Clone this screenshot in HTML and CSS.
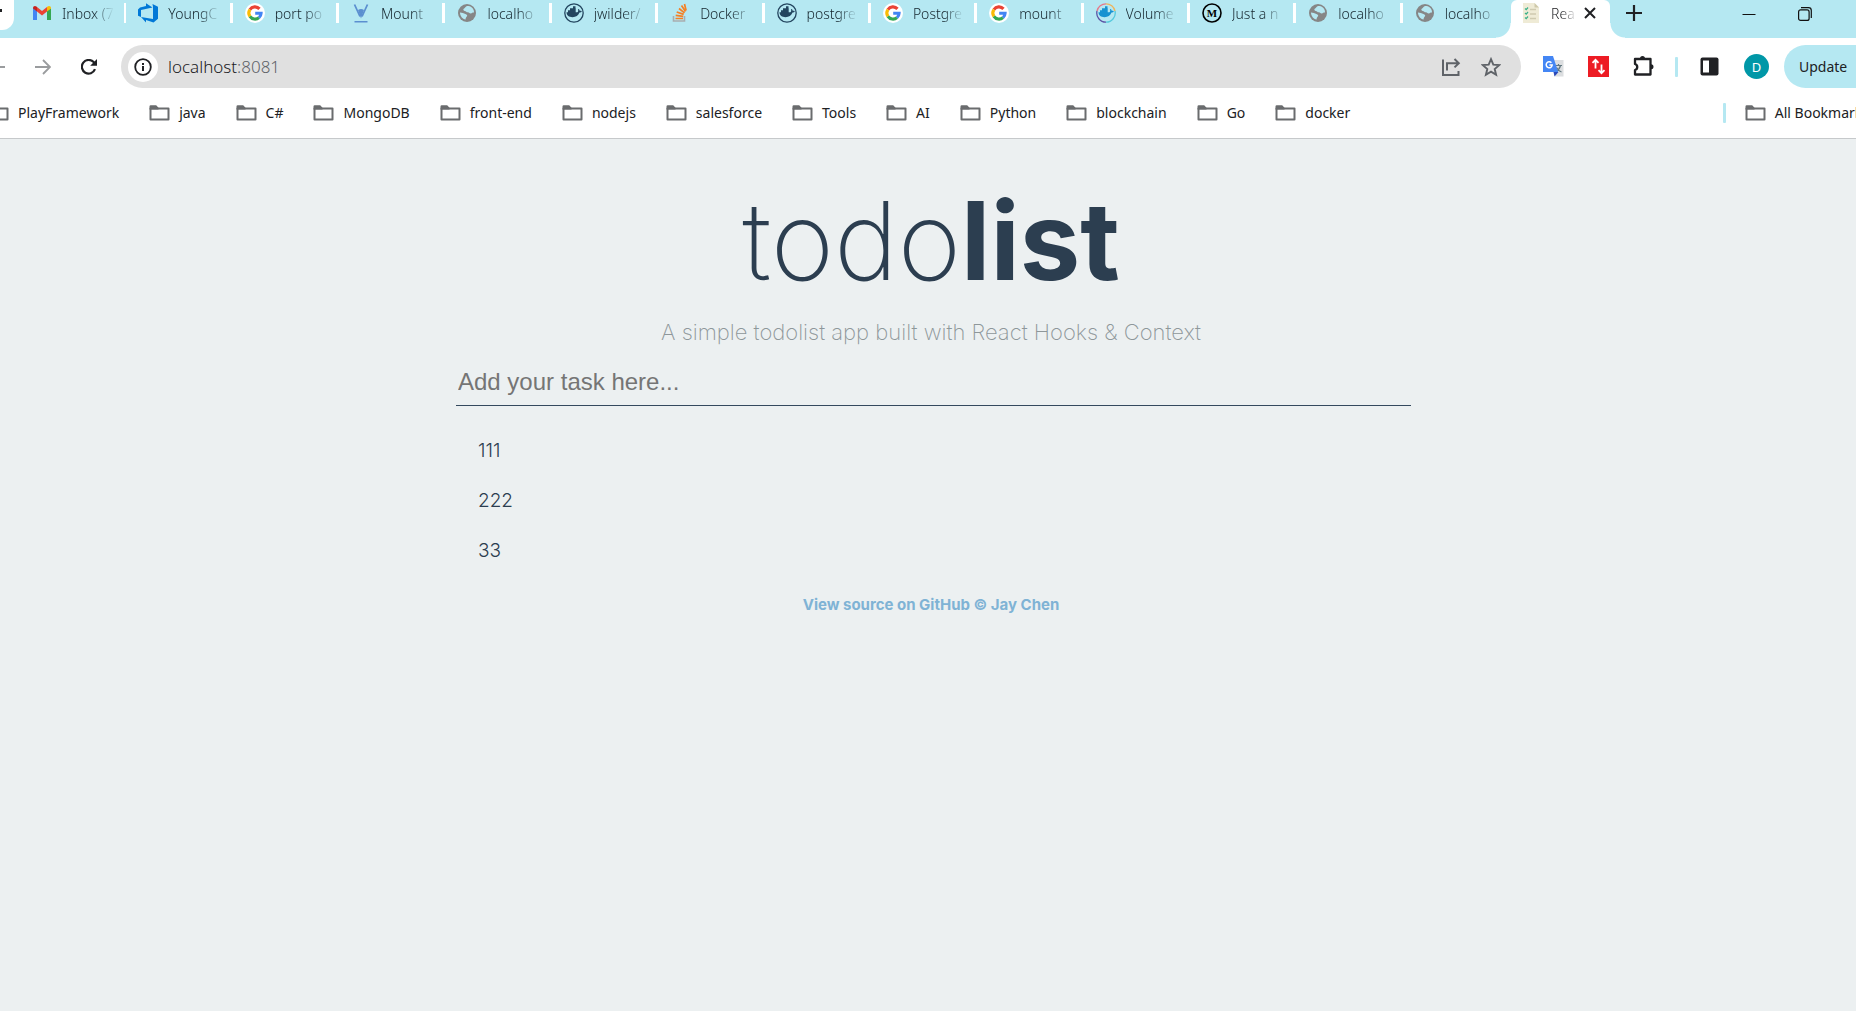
FILE: index.html
```html
<!DOCTYPE html>
<html lang="en">
<head>
<meta charset="utf-8">
<title>React Todolist</title>
<link rel="stylesheet" href="styles.css">
</head>
<body>
<svg class="defs" aria-hidden="true">
  <symbol id="folder" viewBox="0 0 21 16"><path d="M1.500 3.500h18v11h-18z" fill="#fff" stroke="#6a6c6e" stroke-width="2" stroke-linejoin="round"/><path d="M.5 4.500V1.500a1.200 1.200 0 0 1 1.200-1.200h5.500l2.300 2.400v1.800z" fill="#6a6c6e"/></symbol>
  <symbol id="google" viewBox="0 0 20 20"><circle cx="10" cy="10" r="10" fill="#fff"/><g fill="none" stroke-width="3.100"><path d="M4.900 6.600A6.100 6.100 0 0 1 14.500 5.900" stroke="#ea4335"/><path d="M4.900 13.400a6.100 6.100 0 0 1 0-6.800" stroke="#fbbc05"/><path d="M14 14.600a6.100 6.100 0 0 1-9.100-1.200" stroke="#34a853"/><path d="M10.200 10.200h5.900a6.100 6.100 0 0 1-2.100 4.400" stroke="#4285f4"/></g></symbol>
  <symbol id="globe" viewBox="0 0 20 20"><circle cx="10" cy="10" r="9" fill="#868686"/><path d="M11.500 3c-3-.2-2.800 1.600-4.500 2.600-1.300.8-.6 2.200.6 2.300 1.700.2 1.800 1.400 3.300 1.300 1.500 0 1.500 1.500 2.900 1.300 1.200-.2 1.500-1.200 3.200-.9.300-3.300-2.100-6-5.500-6.600zM3 9.500c2 0 3.800.8 5.400 1.500 1.500.8 2.200 1.300 1.600 2.300-.6 1-1.400 1-1.400 3.200C5.500 16 3 13 3 9.500z" fill="#b5e8f2"/></symbol>
  <symbol id="whale" viewBox="0 0 20 20"><path d="M2.500 9.300h10.700c1 0 1.300-1.700.7-2.700l.7-.7c.9.6 1.200 1.300 1.200 2 .8-.1 1.500 0 2 .4-.5 1-1.300 1.300-2.300 1.300-1.200 3.200-3.500 4.600-7 4.600-3.600 0-5.800-1.500-6-4.900zM4 7.300h7.700V9.500H4zM6 5.300h5.700V7.500H6zM9 3.300h2.500V5.500H9z"/></symbol>
  <symbol id="dockerhub" viewBox="0 0 20 20"><circle cx="10" cy="10" r="9.200" fill="none" stroke="#23455f" stroke-width="1.300"/><use href="#whale" fill="#23455f"/></symbol>
</svg>

<header class="browser">
  <div class="tabstrip">
    <button class="tab-search" aria-label="Search tabs"></button>
    <nav class="tabs" aria-label="Open tabs">
      <a class="tab" href="#"><svg viewBox="0 0 20 20"><path d="M1 17V5l4 3v9z" fill="#4285f4"/><path d="M15 17V8l4-3v12z" fill="#34a853"/><path d="M5 8.500V4l5 4 5-4v4.500l-5 4z" fill="#ea4335"/><path d="M1 5.500V5c0-2 2-2.700 3.400-1.600L5 4v4.600z" fill="#c5221f"/><path d="M19 5.500V5c0-2-2-2.700-3.400-1.600L15 4v4.600z" fill="#fbbc04"/></svg><span>Inbox (7</span></a>
      <a class="tab" href="#"><svg viewBox="0 0 20 20"><path d="M0 6.500 2 4.500l6-1.500V.3L14.500 4.500 3 7v7L0 12.800zM20 3.800v12L15.500 19.500 8 17v2.500L3 14l12 2V4L14.500 1z" fill="#0078d7"/></svg><span>YoungC</span></a>
      <a class="tab" href="#"><svg><use href="#google"/></svg><span>port po</span></a>
      <a class="tab" href="#"><svg viewBox="0 0 20 20"><path d="M3.500 1.500 9 13.500M16.500 1.500 11 13.500" fill="none" stroke="#5b8fd0" stroke-width="1.800"/><path d="M7 7q3-2 6 0l-3 8.500z" fill="#5b8fd0"/><path d="M3.500 18h13v1.500h-13z" fill="#5b8fd0"/></svg><span>Mount</span></a>
      <a class="tab" href="#"><svg><use href="#globe"/></svg><span>localho</span></a>
      <a class="tab" href="#"><svg><use href="#dockerhub"/></svg><span>jwilder/</span></a>
      <a class="tab" href="#"><svg viewBox="0 0 20 20"><path d="M3.500 13v5h11v-5" fill="none" stroke="#a9adb0" stroke-width="1.600"/><path d="M5.500 15.500h7.500M5.700 12.300l7.500 1M6.700 9l7 2.400M9 5.500l5.500 4.300M11.500 2.500l4 6M14.500 1l1.600 6.500" stroke="#f48024" stroke-width="1.700"/></svg><span>Docker</span></a>
      <a class="tab" href="#"><svg><use href="#dockerhub"/></svg><span>postgre</span></a>
      <a class="tab" href="#"><svg><use href="#google"/></svg><span>Postgre</span></a>
      <a class="tab" href="#"><svg><use href="#google"/></svg><span>mount</span></a>
      <a class="tab" href="#"><svg viewBox="0 0 20 20"><g fill="none" stroke-width="1.300"><path d="M1 8A9.200 9.200 0 0 1 10 .8" stroke="#e5788a"/><path d="M10 .8A9.200 9.200 0 0 1 19 8" stroke="#eeb45b"/><path d="M19 8a9.200 9.200 0 0 1-9 11.200" stroke="#55c9dc"/><path d="M10 19.200A9.200 9.200 0 0 1 1 8" stroke="#5b54a4"/></g><use href="#whale" fill="#1792d1"/></svg><span>Volume</span></a>
      <a class="tab" href="#"><svg viewBox="0 0 20 20"><circle cx="10" cy="10" r="9" fill="none" stroke="#000" stroke-width="1.600"/><text class="m-letter" x="10" y="14" text-anchor="middle">M</text></svg><span>Just a n</span></a>
      <a class="tab" href="#"><svg><use href="#globe"/></svg><span>localho</span></a>
      <a class="tab" href="#"><svg><use href="#globe"/></svg><span>localho</span></a>
    </nav>
    <div class="tab-active">
      <svg class="page-icon" viewBox="0 0 16 20"><path d="M0 0h11.500L16 4.500V20H0z" fill="#efebd6"/><path d="M11.500 0v4.500H16z" fill="#cfc9aa"/><path d="m2 5.500 1.200 1.200L5 4.500M2 10l1.200 1.200L5 9m-3 5.500 1.200 1.200L5 13.500" fill="none" stroke="#3bb18a" stroke-width="1.200"/><path d="M7 6.500h6M7 11h6m-6 4.500h6" stroke="#cfcab0" stroke-width="1.400"/></svg>
      <span class="active-title">Rea</span>
      <button class="close" aria-label="Close tab"><svg viewBox="0 0 12 12"><path d="m1 1 10 10M11 1 1 11" stroke="#202124" stroke-width="2"/></svg></button>
    </div>
    <button class="new-tab" aria-label="New tab"><svg viewBox="0 0 16 16"><path d="M8 0v16M0 8h16" stroke="#202124" stroke-width="2.200"/></svg></button>
    <div class="window-controls">
      <button aria-label="Minimize"><svg viewBox="0 0 14 14"><path d="M.5 7.500h13" stroke="#111"/></svg></button>
      <button aria-label="Restore"><svg viewBox="0 0 14 14"><rect x=".6" y="2.900" width="10.500" height="10.500" rx="2" fill="none" stroke="#111" stroke-width="1.200"/><path d="M3 .7h7.500a2.800 2.800 0 0 1 2.800 2.800V11" fill="none" stroke="#111" stroke-width="1.200"/></svg></button>
    </div>
  </div>

  <div class="toolbar">
    <div class="nav-buttons">
      <button class="back" aria-label="Back"><svg viewBox="0 0 16 16"><path d="M0 8h16M8 1 1 8l7 7" fill="none" stroke="#9a9c9e" stroke-width="1.800"/></svg></button>
      <button aria-label="Forward"><svg viewBox="0 0 16 16"><path d="M0 8h14M8 1l7 7-7 7" fill="none" stroke="#9a9c9e" stroke-width="1.800"/></svg></button>
      <button aria-label="Reload"><svg viewBox="0 0 16 16"><path d="M14 10.200A6.800 6.800 0 1 1 12.600 3.100L14.500 5" fill="none" stroke="#202124" stroke-width="2.200"/><path d="M16 0v6.800H9.200z" fill="#202124"/></svg></button>
    </div>
    <div class="omnibox">
      <button class="site-info" aria-label="Site information"><svg viewBox="0 0 18 18"><circle cx="9" cy="9" r="7.800" fill="none" stroke="#202124" stroke-width="1.800"/><path d="M8 8h2v5H8zm0-3h2v2H8z" fill="#202124"/></svg></button>
      <a class="url" href="#">localhost<span>:8081</span></a>
      <button aria-label="Share"><svg viewBox="0 0 20 20"><path d="M2 2.500v15.500h15.500v-4M6 13.500V6.200h11M13.500 2l4.300 4.200-4.300 4.200" fill="none" stroke="#5f6368" stroke-width="2"/></svg></button>
      <button aria-label="Bookmark this tab"><svg viewBox="0 0 20 20"><path d="m10 2.200 2.300 5.400 5.900.5-4.500 3.900 1.400 5.800L10 14.700l-5.100 3.100L6.300 12 1.800 8.100l5.900-.5z" fill="none" stroke="#5f6368" stroke-width="1.900"/></svg></button>
    </div>
    <div class="extensions">
      <button aria-label="Google Translate"><svg viewBox="0 0 21 21"><path d="M7 4h13.500v16.500H12z" fill="#dcdee0"/><path d="M12 9.500h7M15.500 8v1.500m2 0c-.7 3-2.500 5-5 6.500m1-4.500c1 2 2.500 3.500 5 4.500" fill="none" stroke="#61777f" stroke-width="1.200"/><path d="M10.500 16h5l-4 4.500z" fill="#2a49b8"/><path d="M0 0h10l5.200 16H0z" fill="#4486f4"/><path d="M8.400 6.700A3 3 0 1 0 9.200 9H6.400" fill="none" stroke="#fff" stroke-width="1.500"/></svg></button>
      <button aria-label="Transfer extension"><svg viewBox="0 0 21 21"><path d="M0 0h21v21H0z" fill="#ed1c24"/><path d="M7.500 12.500V4M4.500 6.800l3-3 3 3M13.500 8.500V17m-3-2.800 3 3 3-3" fill="none" stroke="#fff" stroke-width="1.800"/></svg></button>
      <button aria-label="Extensions"><svg viewBox="0 0 21 21"><path d="M2 3h15.500v15.500H2v-4.500c3-.8 3-5.200 0-6z" fill="none" stroke="#202124" stroke-width="2.300" stroke-linejoin="round"/><path d="M7 2.500a2.500 2.500 0 0 1 5 0zM18 8.300a2.500 2.500 0 0 1 0 5z" fill="#202124"/></svg></button>
      <i class="divider"></i>
      <button aria-label="Side panel"><svg viewBox="0 0 21 21"><rect x="1.500" y="1.500" width="18" height="18" rx="2" fill="#202124"/><path d="M4 4.500h6v12H4z" fill="#fff"/></svg></button>
      <button class="avatar" aria-label="Profile">D</button>
    </div>
    <button class="update">Update</button>
  </div>

  <nav class="bookmarks" aria-label="Bookmarks">
    <a class="cut" href="#"><svg><use href="#folder"/></svg>PlayFramework</a>
    <a href="#"><svg><use href="#folder"/></svg>java</a>
    <a href="#"><svg><use href="#folder"/></svg>C#</a>
    <a href="#"><svg><use href="#folder"/></svg>MongoDB</a>
    <a href="#"><svg><use href="#folder"/></svg>front-end</a>
    <a href="#"><svg><use href="#folder"/></svg>nodejs</a>
    <a href="#"><svg><use href="#folder"/></svg>salesforce</a>
    <a href="#"><svg><use href="#folder"/></svg>Tools</a>
    <a href="#"><svg><use href="#folder"/></svg>AI</a>
    <a href="#"><svg><use href="#folder"/></svg>Python</a>
    <a href="#"><svg><use href="#folder"/></svg>blockchain</a>
    <a href="#"><svg><use href="#folder"/></svg>Go</a>
    <a href="#"><svg><use href="#folder"/></svg>docker</a>
    <div class="all"><i class="divider"></i><a href="#"><svg><use href="#folder"/></svg>All Bookmarks</a></div>
  </nav>
</header>

<main class="page">
  <div class="app">
    <h1>todo<b>list</b></h1>
    <p class="tagline">A simple todolist app built with React Hooks &amp; Context</p>
    <form><input class="task" type="text" aria-label="New task" placeholder="Add your task here..."></form>
    <ul class="list">
      <li>111</li>
      <li>222</li>
      <li>33</li>
    </ul>
    <footer><a href="#">View source on GitHub © Jay Chen</a></footer>
  </div>
</main>
</body>
</html>
```
FILE: styles.css
```css
* { box-sizing: border-box; }

body {
  margin: 0;
  overflow-x: hidden;
  background: #ecf0f1;
  font-family: "Noto Sans", "Open Sans", sans-serif;
  color: #202124;
}

a { color: inherit; text-decoration: none; }
button { padding: 0; border: 0; background: none; font: inherit; color: inherit; flex: none; display: flex; align-items: center; justify-content: center; }
svg { display: block; flex: none; }
.defs { position: absolute; width: 0; height: 0; }

.browser { background: #fff; border-bottom: 1px solid #c6c9cb; overflow: hidden; }

/* tab strip */
.tabstrip { display: flex; height: 38px; background: #b5e8f2; }
.tab-search { width: 14px; height: 30px; margin-right: 6px; background: #fff; border-radius: 0 0 12px 0; }
.tab-search::before { content: ""; width: 2px; height: 3px; margin-right: auto; margin-top: -10px; background: #202124; }
.tabs { flex: 1; min-width: 0; display: flex; }
.tab { flex: 1 1 0; min-width: 0; height: 26px; display: flex; align-items: center; gap: 10px; padding-left: 12px; font-size: 14px; font-weight: 300; color: #14242c; }
.tab svg { width: 20px; height: 20px; }
.tab span { width: 52px; white-space: nowrap; -webkit-mask-image: linear-gradient(90deg, #000 60%, transparent); mask-image: linear-gradient(90deg, #000 60%, transparent); }
.tab:not(:last-child)::after { content: ""; width: 3px; height: 20px; margin-left: auto; background: #fff; }
.m-letter { font: bold 11px "Liberation Serif", serif; }

.tab-active { position: relative; flex: none; width: 99px; margin: 0 1px 0 2px; padding: 0 14px 12px 12px; display: flex; align-items: center; background: #fff; border-radius: 6px 6px 0 0; font-size: 14px; font-weight: 300; }
.tab-active::before, .tab-active::after { content: ""; position: absolute; bottom: 0; width: 15px; height: 15px; }
.tab-active::before { right: 100%; background: radial-gradient(circle at 0 0, transparent 14px, #fff 15px); }
.tab-active::after { left: 100%; background: radial-gradient(circle at 100% 0, transparent 14px, #fff 15px); }
.page-icon { width: 16px; height: 20px; }
.active-title { width: 26px; margin-left: 12px; -webkit-mask-image: linear-gradient(90deg, #000 40%, transparent); mask-image: linear-gradient(90deg, #000 40%, transparent); }
.close { margin-left: auto; }
.close svg { width: 12px; height: 12px; }
.new-tab { width: 46px; height: 26px; }
.new-tab svg { width: 16px; height: 16px; }
.window-controls { display: flex; align-items: center; gap: 42px; height: 28px; padding: 0 44px 0 85px; }
.window-controls svg { width: 14px; height: 14px; }

/* toolbar */
.toolbar { display: flex; align-items: center; height: 57px; }
.nav-buttons { display: flex; gap: 30px; margin-right: 24px; }
.nav-buttons svg { width: 16px; height: 16px; }
.back { margin-left: -11px; }
.omnibox { flex: 1; display: flex; align-items: center; gap: 20px; height: 43px; padding: 0 20px 0 7px; background: #e0e0e0; border-radius: 22px; }
.omnibox svg { width: 20px; height: 20px; }
.site-info { width: 30px; height: 30px; margin-right: -10px; border-radius: 50%; background: #fff; }
.omnibox .site-info svg { width: 18px; height: 18px; }
.url { flex: 1; font-size: 17px; font-weight: 300; line-height: 24px; }
.url span { color: #5f6368; }
.extensions { display: flex; align-items: center; gap: 24px; padding: 0 15px 0 22px; }
.extensions svg { width: 21px; height: 21px; }
.divider { width: 3px; height: 20px; border-radius: 1px; background: #b5e8f2; }
.extensions .divider { margin: 0 -3px; }
.avatar { width: 25px; height: 25px; border-radius: 50%; background: #0097a7; color: #fff; font-size: 13px; }
.update { width: 88px; height: 43px; margin-right: -16px; padding-left: 15px; justify-content: flex-start; background: #b5e8f2; border-radius: 22px 0 0 22px; font-size: 14px; }

/* bookmarks bar */
.bookmarks { display: flex; align-items: center; gap: 30px; height: 43px; padding-bottom: 8px; font-size: 14px; white-space: nowrap; }
.bookmarks a { display: flex; align-items: center; gap: 9px; }
.bookmarks svg { width: 21px; height: 16px; }
.cut { margin-left: -12px; }
.all { display: flex; align-items: center; gap: 19px; margin: 0 -13px 0 auto; }

/* to-do page; the window is cut a little further on its left side */
.page { padding-left: 6px; font-family: Inter, "Open Sans", sans-serif; color: #2c3e50; }
.app { width: 52%; min-width: 320px; max-width: 950px; margin: 0 auto; }
h1 { margin: 0; padding-top: 40px; font-size: 108px; font-weight: 200; line-height: 124px; text-align: center; }
h1 b { font-weight: 700; }
.tagline { margin: 17px 0 0; font-size: 22px; font-weight: 200; line-height: 24px; text-align: center; color: #8e979a; }
.task { display: block; box-sizing: content-box; width: 100%; height: 42px; margin-top: 17px; padding: 0 3px 2px 2px; border: 0; border-bottom: 1px solid #34495e; border-radius: 0; background: none; outline: 0; font: 24px "Liberation Sans", Arial, sans-serif; color: #2c3e50; }
.task::placeholder { color: #757575; opacity: 1; }
.list { margin: 20px 0 0; padding: 0 0 0 22px; list-style: none; font-size: 19px; font-weight: 300; line-height: 50px; }
footer { margin-top: 19px; font-size: 15px; font-weight: 700; line-height: 20px; text-align: center; color: #7fb3d5; }
```
